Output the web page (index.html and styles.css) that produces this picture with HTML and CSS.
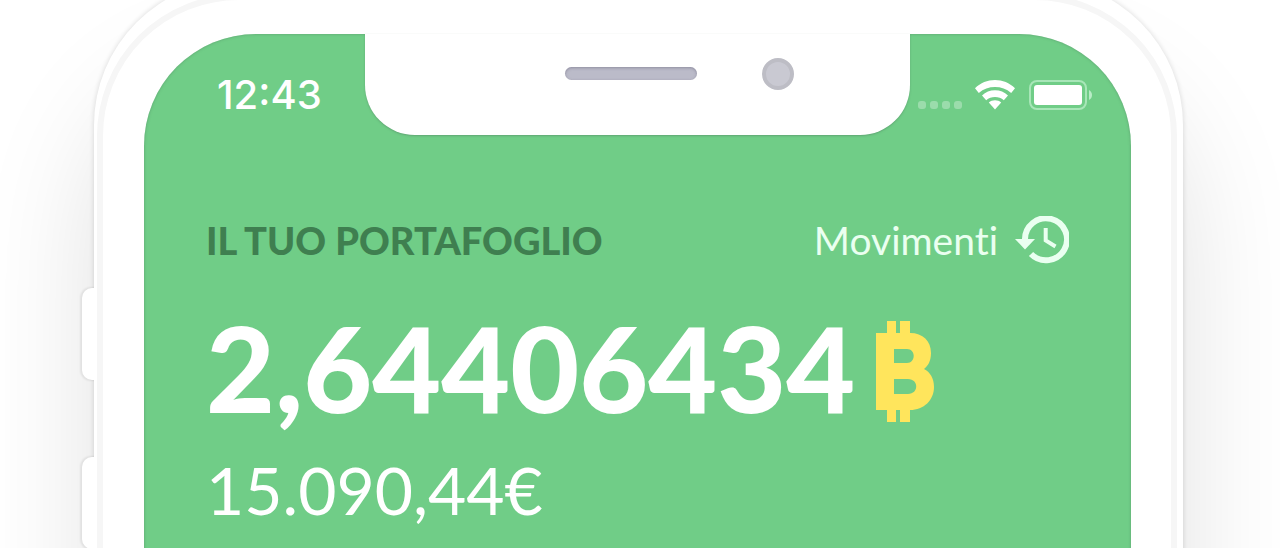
FILE: index.html
```html
<!DOCTYPE html>
<html lang="it">
<head>
    <meta charset="UTF-8">
    <meta name="viewport" content="width=device-width, initial-scale=1.0">
    <title>Il tuo portafoglio</title>
    <link rel="stylesheet" href="styles.css">
</head>
<body>

    <div class="stage">
        <div class="phone">
            <span class="side-button side-button-up"></span>
            <span class="side-button side-button-down"></span>

            <div class="bezel">
                <main class="screen">
                    <div class="status-bar">
                        <div class="time">12:43</div>
                        <div class="notch">
                            <span class="speaker"></span>
                            <span class="camera"></span>
                        </div>
                        <div class="status-icons">
                            <div class="signal"><span></span><span></span><span></span><span></span></div>
                            <svg class="wifi" viewBox="0 0 40 30" width="40" height="30">
                                <path d="M20 0C12.500 0 5.500 2.900 0 8.200L3.800 12.900C8.400 8.800 14 7 20 7S31.600 8.800 36.200 12.900L40 8.200C34.500 2.900 27.500 0 20 0Z"/>
                                <path d="M20 10.200C15 10.200 10.500 12.100 7 15.400L11.200 20.200C13.600 18 16.700 16.900 20 16.900S26.400 18 28.800 20.200L33 15.400C29.500 12.100 25 10.200 20 10.200Z"/>
                                <path d="M20 20.200C17.600 20.200 15.500 21 13.800 22.400L20 29.500L26.200 22.400C24.500 21 22.400 20.200 20 20.200Z"/>
                            </svg>
                            <svg class="battery" viewBox="0 0 64 30" width="64" height="30">
                                <rect class="battery-case" x="1" y="1" width="56" height="28" rx="7"/>
                                <rect x="5" y="5" width="48" height="20" rx="3"/>
                                <path class="battery-tip" d="M60 10C64 12 64 18 60 20Z"/>
                            </svg>
                        </div>
                    </div>

                    <div class="wallet">
                        <div class="wallet-header">
                            <h1>IL TUO PORTAFOGLIO</h1>
                            <a href="#movimenti" class="history">
                                Movimenti
                                <svg viewBox="0 0 54 48" width="54" height="48">
                                    <path class="line" d="M10 24A21 21 0 1 1 16 38"/>
                                    <path d="M0 23H20L10 33.500Z"/>
                                    <path class="hand" d="M30.700 12V24.500L40.500 30.500"/>
                                </svg>
                            </a>
                        </div>

                        <div class="balance">
                            <span>2,64406434</span>
                            <svg viewBox="0 0 60 102" width="60" height="102">
                                <path d="M0 12H11V0H20V12H24V0H34V12C47 12 55 20 55 32C55 40 52 45 48 48C54 51 58 57 58 66C58 79 48 89 34 89V101H24V89H20V101H11V89H0ZM18 28V42H31C40 42 40 28 31 28ZM18 58V73H32C43 73 43 58 32 58Z"/>
                            </svg>
                        </div>

                        <p class="fiat">15.090,44€</p>
                    </div>
                </main>
            </div>
        </div>
    </div>

</body>
</html>
```
FILE: styles.css
```css
body {
    font-family: Lato, "Liberation Sans", sans-serif;
    background-color: #ffffff;
    margin: 0;
}

.stage {
    height: 100vh;
    padding: 0 97px 0 94px;
    overflow: hidden;
    box-sizing: border-box;
}

/* Phone body */
.phone {
    position: relative;
    display: flex;
    min-height: 200vh;
    margin-top: -20px;
    padding: 14px 6px 0 3px;
    box-sizing: border-box;
    background-color: #ffffff;
    border-radius: 145px;
    box-shadow: 0 0 4px 1px rgba(0, 0, 0, 0.1), 0 100px 120px rgba(0, 0, 0, 0.12);
}

.bezel {
    flex: 1;
    display: flex;
    padding: 34px 40px 0 41px;
    border: 6px solid #f6f6f6;
    border-radius: 142px;
}

.side-button {
    position: absolute;
    left: -12px;
    width: 16px;
    height: 92px;
    background-color: #ffffff;
    border-radius: 10px 0 0 10px;
    box-shadow: -1px 0 2px 1px rgba(0, 0, 0, 0.07);
    clip-path: inset(-4px 4px -4px -4px);
}

.side-button-up {
    top: 308px;
}

.side-button-down {
    top: 477px;
}

.screen {
    flex: 1;
    background-color: #70cd87;
    border-radius: 112px;
    box-shadow: inset 0 0 3px rgba(80, 130, 95, 0.6);
    color: #ffffff;
}

/* Status bar */
.status-bar {
    display: grid;
    grid-template-columns: 1fr 545px 1fr;
    height: 101px;
}

.time {
    padding: 37px 0 0 73px;
    font-family: Inter, "Liberation Sans", sans-serif;
    font-size: 40px;
    font-weight: 500;
    line-height: 48px;
}

.notch {
    display: flex;
    justify-content: flex-end;
    gap: 65px;
    padding: 24px 116px 0 0;
    background-color: #ffffff;
    border-radius: 0 0 50px 50px;
    box-shadow: 0 1px 2px rgba(80, 130, 95, 0.5);
}

.speaker {
    width: 132px;
    height: 13px;
    margin-top: 9px;
    border-radius: 7px;
    background-color: #bbbbc9;
    box-shadow: inset 0 1px 3px rgba(100, 95, 120, 0.5);
}

.camera {
    width: 32px;
    height: 32px;
    border-radius: 50%;
    border: 4px solid #bdbdc5;
    box-sizing: border-box;
    background-color: #c9c9d2;
}

.status-icons {
    display: flex;
    align-items: flex-start;
    padding: 46px 0 0 8px;
    fill: #ffffff;
}

.signal {
    display: flex;
    gap: 4px;
    margin: 21px 13px 0 0;
}

.signal span {
    width: 8px;
    height: 8px;
    border-radius: 3px;
    background-color: rgba(255, 255, 255, 0.3);
}

.battery {
    margin-left: 14px;
}

.battery-case {
    fill: none;
    stroke: #a8e6b8;
    stroke-width: 2;
}

.battery-tip {
    fill: #b8ecc6;
}

/* Wallet */
.wallet {
    padding: 75px 62px 0;
}

.wallet-header {
    display: flex;
    justify-content: space-between;
    align-items: center;
    height: 60px;
}

h1 {
    margin: 0;
    color: #3f7f50;
    font-size: 38px;
    font-weight: 900;
    line-height: 48px;
}

.history {
    display: flex;
    align-items: center;
    gap: 17px;
    color: #eafff0;
    font-size: 39px;
    font-variant-ligatures: none;
    line-height: 48px;
    text-decoration: none;
    fill: #eafff0;
}

.history .line,
.history .hand {
    fill: none;
    stroke: #eafff0;
    stroke-width: 6;
}

.history .hand {
    stroke-width: 4;
}

.balance {
    display: flex;
    align-items: flex-end;
    gap: 21px;
    margin-top: 41px;
    font-size: 119px;
    font-weight: 900;
    line-height: 112px;
}

.balance svg {
    fill: #ffe55c;
    fill-rule: evenodd;
}

.fiat {
    margin: 27px 0 0;
    font-size: 66px;
    line-height: 80px;
}
```
